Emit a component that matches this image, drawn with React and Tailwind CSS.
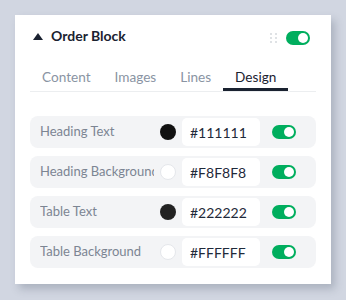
import React from "react";

const rows = [
  { label: "Heading Text", color: "#111111", swatch: "bg-[#111111]" },
  { label: "Heading Background", color: "#F8F8F8", swatch: "bg-white border border-[#e5e7eb]" },
  { label: "Table Text", color: "#222222", swatch: "bg-[#222222]" },
  { label: "Table Background", color: "#FFFFFF", swatch: "bg-white border border-[#e5e7eb]" },
];

function Toggle() {
  return (
    <div className="w-[24px] h-[14px] rounded-full bg-[#00ae5e] flex items-center justify-end pr-[2px]">
      <div className="w-[10px] h-[10px] rounded-full bg-white" />
    </div>
  );
}

export default function App() {
  return (
    <div className="min-h-[300px] bg-[#d1d6e1] p-[15px] font-['Lato',sans-serif]">
      <div className="w-[316px] h-[269px] bg-white shadow-[4px_5px_8px_rgba(60,70,90,0.25)] px-[15px] pt-[16px]">
        <div className="flex items-center h-[14px]">
          <svg width="10" height="7" viewBox="0 0 10 7" className="ml-[3px] mr-[8px] -mt-[4px]">
            <polygon points="5,0 10,7 0,7" fill="#1a2230" />
          </svg>
          <span className="text-[14px] font-bold text-[#1a2230] leading-[14px] -mt-[4px]">Order Block</span>
          <div className="ml-auto grid grid-cols-2 gap-x-[3px] gap-y-[2px] mr-[9px]">
            {[0, 1, 2, 3, 4, 5].map((i) => (
              <div key={i} className="w-[2px] h-[2px] rounded-full bg-[#d5d8dd]" />
            ))}
          </div>
          <div className="mr-[6px]">
            <Toggle />
          </div>
        </div>
        <div className="mt-[14px] flex border-b border-[#eceef0] text-[13.6px]">
          {["Content", "Images", "Lines", "Design"].map((t) => (
            <div
              key={t}
              className={
                "px-[12px] pt-[8px] pb-[1px] leading-[20px] border-b-[3px] " +
                (t === "Design" ? "border-[#1a2230] text-[#1a2230]" : "border-transparent text-[#8a94a3]")
              }
            >
              {t}
            </div>
          ))}
        </div>
        <div className="mt-[24px] flex flex-col gap-[8px]">
          {rows.map((r) => (
            <div key={r.label} className="h-[32px] rounded-lg bg-[#f3f4f6] flex items-center pl-[10px]">
              <div className="w-[114px] overflow-hidden whitespace-nowrap text-[13px] text-[#7c8593]">{r.label}</div>
              <div className={"ml-[6px] w-[16px] h-[16px] rounded-full " + r.swatch} />
              <div className="ml-[6px] w-[78px] h-[28px] rounded-[5px] bg-white flex items-center pl-[8px] text-[14px] text-[#1f2a3a]">
                {r.color}
              </div>
              <div className="ml-[12px]">
                <Toggle />
              </div>
            </div>
          ))}
        </div>
      </div>
    </div>
  );
}
